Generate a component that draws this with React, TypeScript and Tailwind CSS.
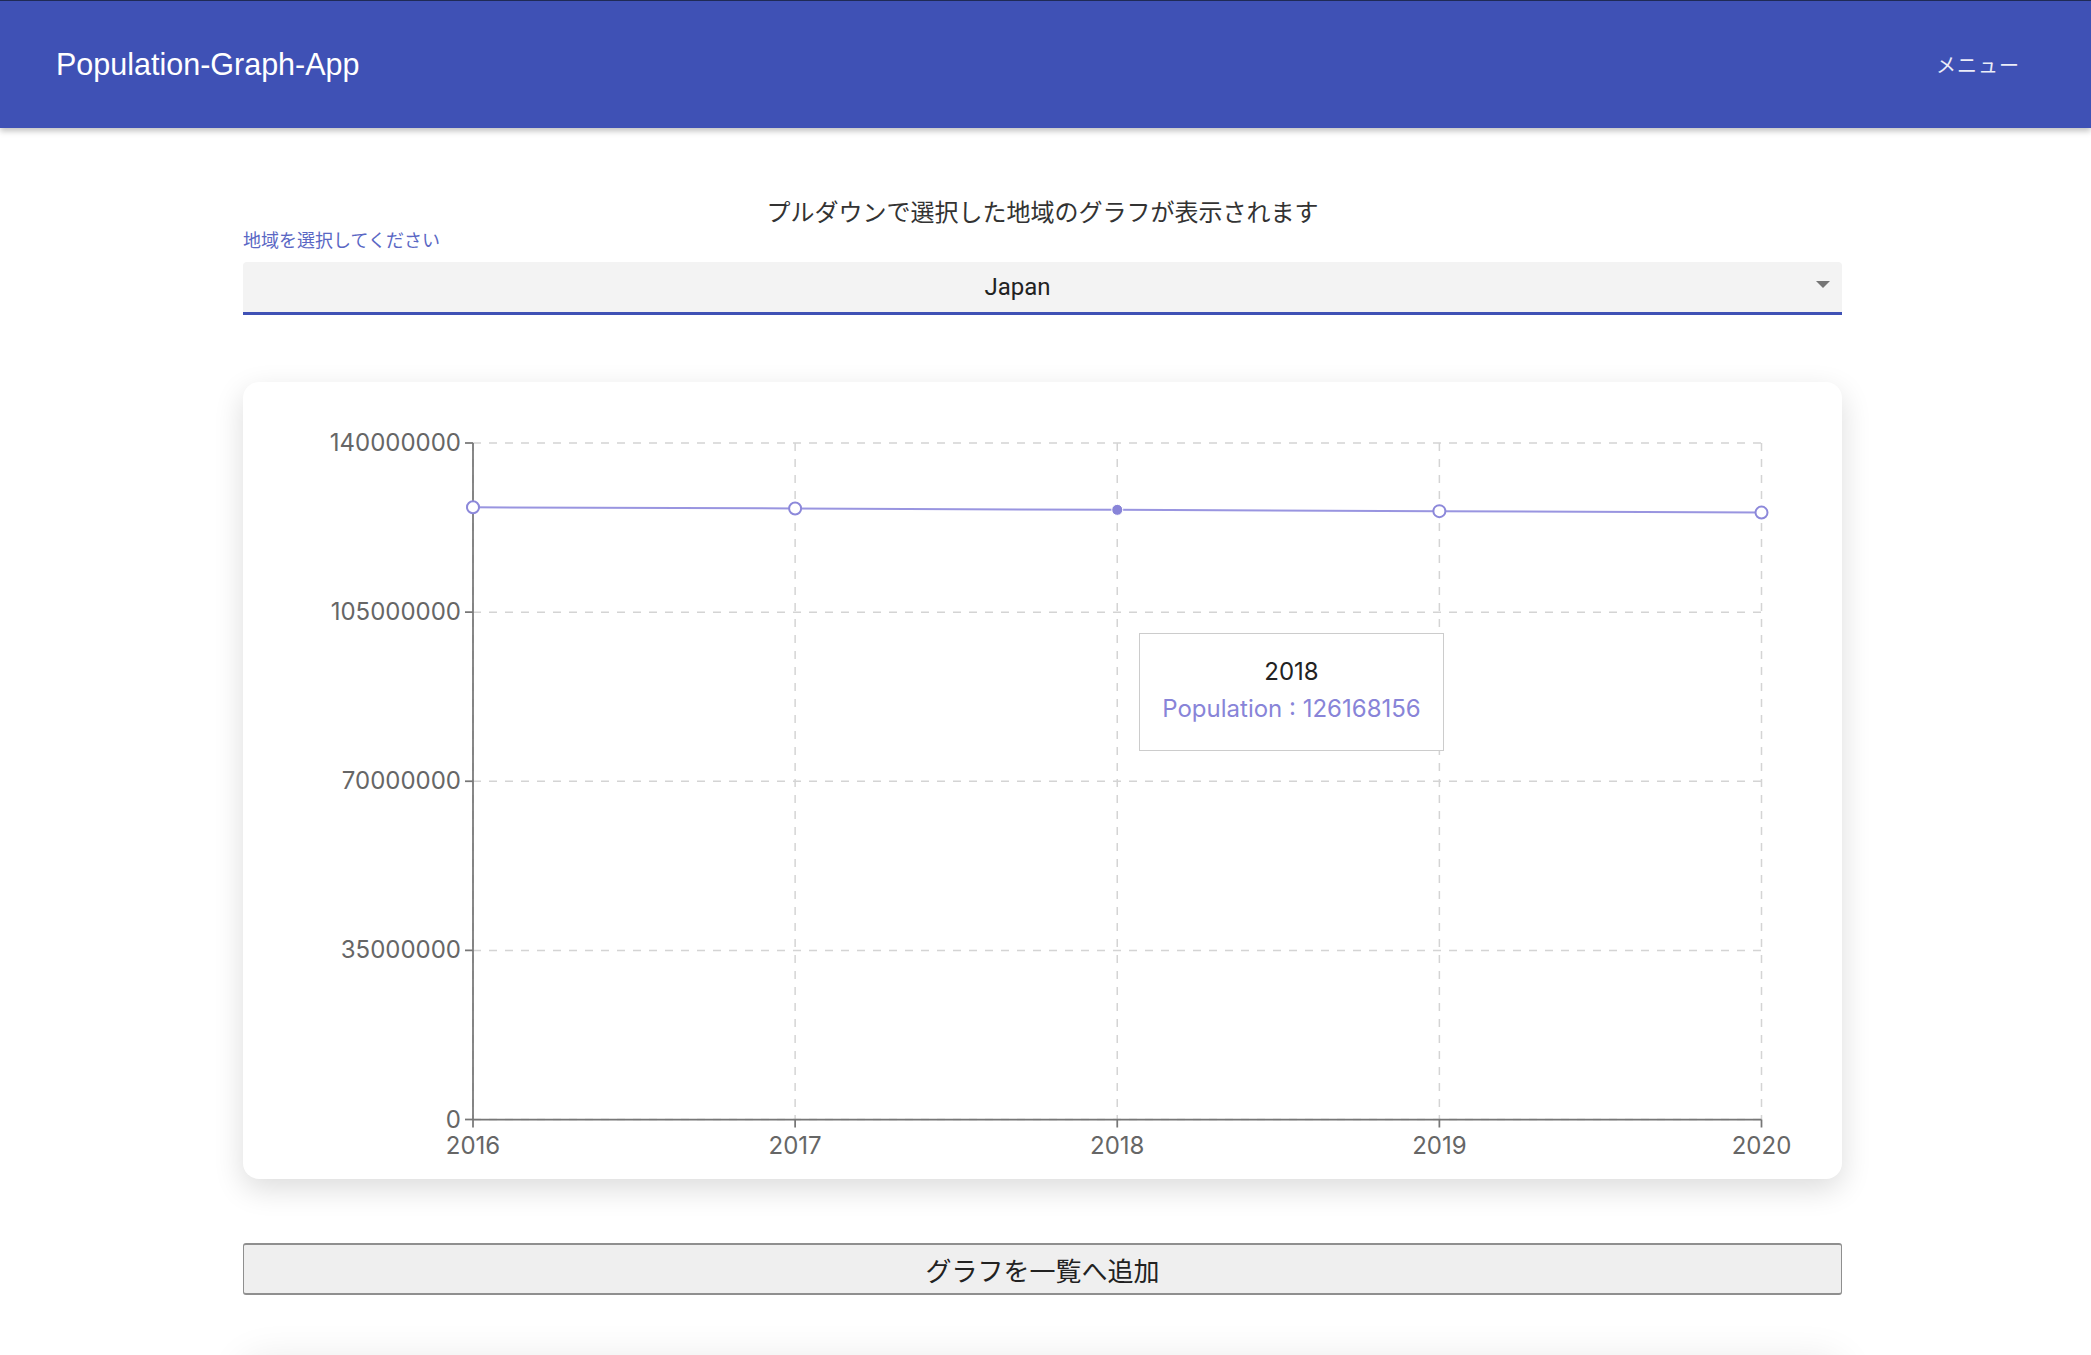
import React from 'react';

type Point = { year: number; population: number };

const data: Point[] = [
  { year: 2016, population: 126700000 },
  { year: 2017, population: 126450000 },
  { year: 2018, population: 126168156 },
  { year: 2019, population: 125900000 },
  { year: 2020, population: 125600000 },
];

const yTicks = [0, 35000000, 70000000, 105000000, 140000000];

// chart box in card coordinates
const X0 = 230;
const X1 = 1518.5;
const Y0 = 61;
const Y1 = 737.5;
const MAX = 140000000;

const xAt = (i: number) => X0 + (i * (X1 - X0)) / (data.length - 1);
const yAt = (v: number) => Y1 - (v / MAX) * (Y1 - Y0);

function PopulationChart({ activeIndex }: { activeIndex: number }) {
  const linePath = data
    .map((d, i) => `${i === 0 ? 'M' : 'L'}${xAt(i)},${yAt(d.population)}`)
    .join(' ');

  return (
    <svg width={1599} height={797} className="block">
      {/* grid */}
      <g stroke="#d4d4d4" strokeWidth={1.5} strokeDasharray="8 8">
        {yTicks.map((t) => (
          <line key={`h${t}`} x1={X0} x2={X1} y1={yAt(t)} y2={yAt(t)} />
        ))}
        {data.map((d, i) => (
          <line key={`v${d.year}`} x1={xAt(i)} x2={xAt(i)} y1={Y0} y2={Y1} />
        ))}
      </g>

      {/* axes */}
      <g stroke="#777" strokeWidth={1.75}>
        <line x1={X0} x2={X0} y1={Y0} y2={Y1} />
        {yTicks.map((t) => (
          <line key={`yt${t}`} x1={X0 - 8} x2={X0} y1={yAt(t)} y2={yAt(t)} />
        ))}
        <line x1={X0} x2={X1} y1={Y1} y2={Y1} />
        {data.map((d, i) => (
          <line key={`xt${d.year}`} x1={xAt(i)} x2={xAt(i)} y1={Y1} y2={Y1 + 8} />
        ))}
      </g>

      <g fill="#666" fontSize={24} style={{ fontFamily: 'Inter, "Liberation Sans", sans-serif' }}>
        {yTicks.map((t) => (
          <text key={`yl${t}`} x={X0 - 12} y={yAt(t) + 8} textAnchor="end">
            {t}
          </text>
        ))}
        {data.map((d, i) => (
          <text key={`xl${d.year}`} x={xAt(i)} y={Y1 + 34} textAnchor="middle">
            {d.year}
          </text>
        ))}
      </g>

      {/* line */}
      <path d={linePath} fill="none" stroke="#9995e0" strokeWidth={2} />
      {data.map((d, i) =>
        i === activeIndex ? (
          <circle key={`d${d.year}`} cx={xAt(i)} cy={yAt(d.population)} r={5.5} fill="#8884d8" stroke="#fff" strokeWidth={1} />
        ) : (
          <circle key={`d${d.year}`} cx={xAt(i)} cy={yAt(d.population)} r={6} fill="#fff" stroke="#8c88da" strokeWidth={2} />
        ),
      )}
    </svg>
  );
}

export default function App() {
  const active = 2;

  return (
    <div className="h-[1355px] overflow-hidden bg-white">
      <header className="flex h-[128px] items-center justify-between border-t border-[#1f2a55] bg-[#3f51b5] pl-[56px] pr-[71px] shadow-[0_3px_6px_rgba(0,0,0,0.25)]">
        <h1 className="text-[30.5px] text-white" style={{ fontFamily: '"Liberation Sans", Arial, sans-serif' }}>
          Population-Graph-App
        </h1>
        <button
          type="button"
          className="text-[20px] tracking-[1px] text-white/90"
          style={{ fontFamily: '"Noto Sans CJK JP", sans-serif' }}
        >
          メニュー
        </button>
      </header>

      <main className="ml-[243px] w-[1599px]" style={{ fontFamily: '"Noto Sans CJK JP", sans-serif' }}>
        <p className="pt-[66px] text-center text-[24px] leading-[34px] text-[#333]">
          プルダウンで選択した地域のグラフが表示されます
        </p>

        <label className="mt-[1px] block text-[18px] leading-[21px] text-[#5a67c4]">地域を選択してください</label>

        <div className="relative mt-[12px] flex h-[53px] items-center justify-center rounded-t-[4px] border-b-[3px] border-[#3f51b5] bg-[#f3f3f3] pr-[50px]">
          <span className="text-[24px] text-[#222]" style={{ fontFamily: 'Roboto, "Liberation Sans", sans-serif' }}>
            Japan
          </span>
          <span className="absolute right-[12px] top-[19px] h-0 w-0 border-x-[7px] border-t-[7px] border-x-transparent border-t-[#757575]" />
        </div>

        <section className="relative mt-[67px] h-[797px] rounded-[16px] bg-white shadow-[0_10px_30px_rgba(0,0,0,0.14)]">
          <PopulationChart activeIndex={active} />
          <div
            className="absolute left-[896px] top-[251px] flex h-[118px] w-[305px] flex-col items-center justify-center gap-[1px] border border-[#ccc] bg-white pb-[3px] text-[24px]"
            style={{ fontFamily: 'Inter, "Liberation Sans", sans-serif' }}
          >
            <span className="text-[#222]">{data[active].year}</span>
            <span className="text-[#8884d8]">Population : {data[active].population}</span>
          </div>
        </section>

        <button
          type="button"
          className="mt-[64px] flex h-[52px] w-full items-center justify-center rounded-[3px] border-x border-y-2 border-[#8f8f8f] bg-[#efefef] text-[26px] text-[#222]"
        >
          グラフを一覧へ追加
        </button>

        <div className="mt-[72px] h-[400px] rounded-[16px] bg-white shadow-[0_-8px_40px_rgba(0,0,0,0.09)]" />
      </main>
    </div>
  );
}
